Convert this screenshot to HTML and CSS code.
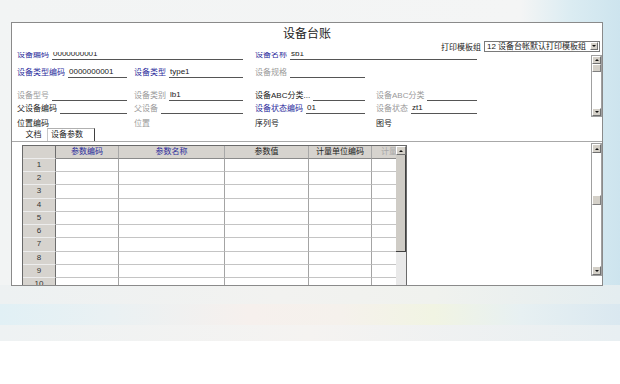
FILE: index.html
```html
<!DOCTYPE html>
<html>

<head>
    <meta charset="utf-8">
    <title>设备台账</title>
    <link rel="stylesheet" href="styles.css">
</head>

<body>
    <div class="desk">
        <div class="win">
            <div class="title">设备台账</div>
            <div class="printbar">
                <span class="plabel">打印模板组</span>
                <div class="select">
                    <span class="stext">12 设备台帐默认打印模板组</span>
                    <span class="btn dn sel-btn"></span>
                </div>
            </div>

            <div class="form">
                <div class="form-body">
                    <div class="form-inner">
                        <div class="row r1">
                            <div class="fld s2 e2"><span class="lbl blue">设备编码</span><span class="val">0000000001</span></div>
                            <div class="fld s2 e4"><span class="lbl blue">设备名称</span><span class="val">sb1</span></div>
                        </div>
                        <div class="row r2">
                            <div class="fld e1"><span class="lbl blue">设备类型编码</span><span class="val">0000000001</span></div>
                            <div class="fld e2"><span class="lbl blue">设备类型</span><span class="val">type1</span></div>
                            <div class="fld e3"><span class="lbl gray">设备规格</span><span class="val"></span></div>
                        </div>
                        <div class="row r3">
                            <div class="fld e1"><span class="lbl gray">设备型号</span><span class="val"></span></div>
                            <div class="fld e2"><span class="lbl gray">设备类别</span><span class="val">lb1</span></div>
                            <div class="fld e3"><span class="lbl">设备ABC分类...</span><span class="val"></span></div>
                            <div class="fld e4"><span class="lbl gray">设备ABC分类</span><span class="val"></span></div>
                        </div>
                        <div class="row r4">
                            <div class="fld e1"><span class="lbl">父设备编码</span><span class="val"></span></div>
                            <div class="fld e2"><span class="lbl gray">父设备</span><span class="val"></span></div>
                            <div class="fld e3"><span class="lbl blue">设备状态编码</span><span class="val">01</span></div>
                            <div class="fld e4"><span class="lbl gray">设备状态</span><span class="val">zt1</span></div>
                        </div>
                        <div class="row r5">
                            <div class="fld e1"><span class="lbl">位置编码</span><span class="val"></span></div>
                            <div class="fld e2"><span class="lbl gray">位置</span><span class="val"></span></div>
                            <div class="fld e3"><span class="lbl">序列号</span><span class="val"></span></div>
                            <div class="fld e4"><span class="lbl">图号</span><span class="val"></span></div>
                        </div>
                    </div>
                </div>
                <div class="vscroll form-scroll">
                    <span class="btn up"></span>
                    <span class="thumb"></span>
                    <span class="track"></span>
                    <span class="btn dn"></span>
                </div>
            </div>

            <div class="tabs">
                <span class="tab">文档</span>
                <span class="tab active">设备参数</span>
            </div>

            <div class="panel">
                <div class="grid">
                    <div class="gtable">
                        <div class="grow ghead">
                            <span class="rn"></span>
                            <span class="blue">参数编码</span>
                            <span class="blue">参数名称</span>
                            <span>参数值</span>
                            <span>计量单位编码</span>
                            <span class="gray left">计量</span>
                        </div>
                        <div class="grow"><span class="rn">1</span><span></span><span></span><span></span><span></span><span></span></div>
                        <div class="grow"><span class="rn">2</span><span></span><span></span><span></span><span></span><span></span></div>
                        <div class="grow"><span class="rn">3</span><span></span><span></span><span></span><span></span><span></span></div>
                        <div class="grow"><span class="rn">4</span><span></span><span></span><span></span><span></span><span></span></div>
                        <div class="grow"><span class="rn">5</span><span></span><span></span><span></span><span></span><span></span></div>
                        <div class="grow"><span class="rn">6</span><span></span><span></span><span></span><span></span><span></span></div>
                        <div class="grow"><span class="rn">7</span><span></span><span></span><span></span><span></span><span></span></div>
                        <div class="grow"><span class="rn">8</span><span></span><span></span><span></span><span></span><span></span></div>
                        <div class="grow"><span class="rn">9</span><span></span><span></span><span></span><span></span><span></span></div>
                        <div class="grow"><span class="rn">10</span><span></span><span></span><span></span><span></span><span></span></div>
                    </div>
                    <div class="gscroll">
                        <span class="btn up"></span>
                        <span class="gthumb"></span>
                    </div>
                </div>
                <div class="blank"></div>
                <div class="vscroll panel-scroll">
                    <span class="btn up"></span>
                    <span class="track t1"></span>
                    <span class="thumb"></span>
                    <span class="track"></span>
                    <span class="btn dn"></span>
                </div>
            </div>
        </div>
    </div>
</body>

</html>
```

FILE: styles.css
```css
body {
    margin: 0;
    font-family: "Liberation Sans", "Noto Sans CJK SC", sans-serif;
    font-size: 8px;
    color: #222;
    background-color: #fff;
}

.desk {
    height: 341px;
    box-sizing: border-box;
    padding: 22px 0 0 11px;
    background:
        linear-gradient(90deg, #e1f0f5 0, #eaf1f3 18%, #f6f0ed 40%, #f5f1ec 55%, #f1f4e3 70%, #e7f0f2 84%, #dae8f0 100%) 0 304px / 100% 21px no-repeat,
        linear-gradient(90deg, #edf1f2 0, #f2f2f0 45%, #f0f2ee 70%, #e4edf0 100%) 0 285px / 100% 19px no-repeat,
        linear-gradient(90deg, #eef2f3 0, #f5f3f1 50%, #e8eff2 100%) 0 325px / 100% 16px no-repeat,
        linear-gradient(90deg, #f2f4f4 0, #f4f5f5 84%, #dbecf2 92%, #cde4ee 100%);
}

.win {
    width: 590px;
    height: 262px;
    border: 1px solid #8a8a8a;
    background-color: #fff;
    display: flex;
    flex-direction: column;
}

.blue {
    color: #2c2c9c;
}

.gray {
    color: #9a9a9a;
}

.title {
    height: 17px;
    line-height: 22px;
    text-align: center;
    font-size: 12px;
    color: #222;
}

.printbar {
    height: 12px;
    display: flex;
    justify-content: flex-end;
    align-items: center;
}

.plabel {
    margin-right: 3px;
}

.select {
    width: 116px;
    height: 11px;
    box-sizing: border-box;
    margin-right: 2px;
    border: 1px solid #7a7a7a;
    display: flex;
    align-items: center;
}

.stext {
    flex: 1;
    padding-left: 2px;
    line-height: 9px;
    white-space: nowrap;
}

.sel-btn {
    width: 8px;
    height: 7px;
    margin-right: 1px;
}

/* scroll buttons */
.btn {
    display: flex;
    align-items: center;
    justify-content: center;
    box-sizing: border-box;
    height: 8px;
    background-color: #d4d0c8;
    border: 1px solid;
    border-color: #fff #707070 #707070 #fff;
    flex: none;
}

.btn::after {
    content: "";
    border-left: 2px solid transparent;
    border-right: 2px solid transparent;
}

.up::after {
    border-bottom: 2px solid #111;
}

.dn::after {
    border-top: 2px solid #111;
}

.vscroll {
    width: 11px;
    box-sizing: border-box;
    border: 1px solid #a0a0a0;
    display: flex;
    flex-direction: column;
    background-color: #fff;
}

.thumb {
    height: 8px;
    box-sizing: border-box;
    background-color: #d4d0c8;
    border: 1px solid;
    border-color: #fff #808080 #808080 #fff;
}

.track {
    flex: 1;
}

/* header form */
.form {
    height: 76px;
    display: flex;
}

.form-body {
    flex: 1;
    overflow: hidden;
    padding-left: 5px;
}

.form-inner {
    margin-top: -8px;
}

.form-scroll {
    margin-top: 3px;
    height: 62px;
}

.row {
    display: grid;
    grid-template-columns: 117px 121px 121px 102px;
    align-items: end;
}

.r1 { height: 16px; }
.r2 { height: 18px; }
.r3 { height: 23px; }
.r4 { height: 13px; }
.r5 { height: 15px; }

.fld {
    display: flex;
    align-items: flex-end;
    line-height: 10px;
}

.s2 { grid-column: span 2; }
.e1 { padding-right: 7px; }
.e2 { padding-right: 12px; }
.e3 { padding-right: 11px; }
.e4 { padding-right: 1px; }

.lbl {
    margin-right: 3px;
    white-space: nowrap;
}

.val {
    flex: 1;
    height: 10px;
    border-bottom: 1px solid #555;
    padding-left: 1px;
    white-space: nowrap;
}

/* tabs */
.tabs {
    height: 13px;
    display: flex;
    padding-left: 8px;
}

.tab {
    width: 27px;
    line-height: 13px;
    text-align: center;
}

.tab.active {
    width: 48px;
    box-sizing: border-box;
    text-align: left;
    padding-left: 3px;
    border: 1px solid;
    border-color: #b0b0b0 #404040 transparent #c8c8c8;
    border-bottom: none;
    line-height: 12px;
}

/* bottom panel */
.panel {
    flex: 1;
    border-top: 1px solid #a8a8a8;
    display: flex;
    overflow: hidden;
}

.grid {
    margin: 3px 0 0 10px;
    display: flex;
    border: 1px solid #6a6a6a;
    border-bottom: none;
    align-self: flex-start;
}

.gtable {
    width: 373px;
}

.grow {
    display: grid;
    grid-template-columns: 33px 63px 106px 84px 63px 24px;
    height: 13.22px;
}

.grow span {
    box-sizing: border-box;
    border-right: 1px solid #a4a4a4;
    border-bottom: 1px solid #c4c4c4;
    text-align: center;
    line-height: 12px;
    overflow: hidden;
    white-space: nowrap;
}

.grow span:last-child {
    border-right: none;
}

.grow .rn {
    background-color: #d6d3ce;
    border-right: 1px solid #6e6e6e;
    border-bottom: 1px solid #ededed;
    color: #333;
}

.ghead {
    height: 13px;
}

.ghead span {
    background-color: #d6d3ce;
    border-bottom: 1px solid #8a8a8a;
    border-right: 1px solid #a8a8a8;
}

.ghead .left {
    text-align: left;
    padding-left: 9px;
    color: #a8a8a8;
}

.gscroll {
    width: 10px;
    height: 140px;
    display: flex;
    flex-direction: column;
    background-color: #e9e9e9;
}

.gscroll .btn {
    height: 9px;
}

.gthumb {
    height: 97px;
    box-sizing: border-box;
    background-color: #cfccc6;
    border-right: 1px solid #404040;
    border-bottom: 1px solid #404040;
}

.blank {
    flex: 1;
}

.panel-scroll {
    margin-top: 1px;
    height: 133px;
}

.panel-scroll .btn {
    height: 9px;
}

.panel-scroll .t1 {
    flex: none;
    height: 42px;
}

.panel-scroll .thumb {
    height: 10px;
}
```
